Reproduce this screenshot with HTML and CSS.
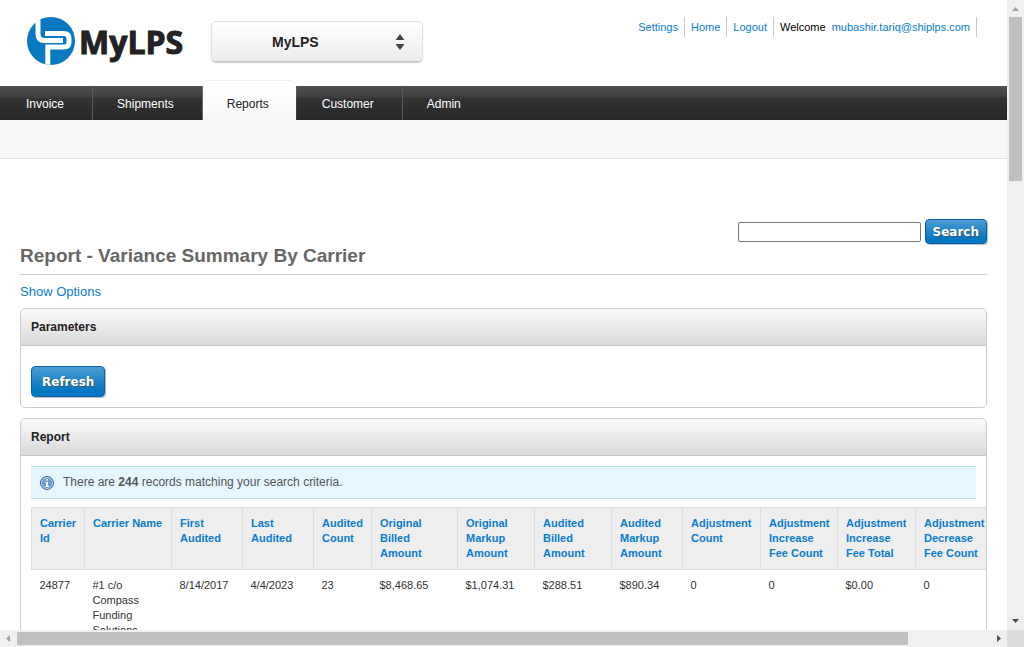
FILE: index.html
```html
<!DOCTYPE html>
<html lang="en">
<head>
<meta charset="utf-8">
<title>MyLPS - Variance Summary By Carrier</title>
<link rel="stylesheet" href="styles.css">
</head>
<body>
<div class="window">
  <div class="page">
    <header class="header">
      <a class="logo" href="#">
        <svg class="logo-mark" viewBox="0 0 48 48" aria-hidden="true">
          <defs><clipPath id="disc"><circle cx="24" cy="24" r="24"/></clipPath></defs>
          <circle cx="24" cy="24" r="24" fill="#0879c0"/>
          <g clip-path="url(#disc)" fill="none" stroke="#fff">
            <path d="M11 0V17Q11 23.500 17.500 23.500H36" stroke-width="5"/>
            <path d="M20.800 48V30H37Q42 30 42 25V21.500Q42 16.500 37 16.500H18" stroke-width="5"/>
          </g>
        </svg>
        <span class="logo-text">MyLPS</span>
      </a>
      <div class="picker">
        <select class="picker-select" aria-label="Application"><option>MyLPS</option></select>
        <svg class="picker-arrows" viewBox="0 0 10 16" aria-hidden="true"><path d="M5 0L9.500 6H.5ZM5 16L.5 10H9.500Z" fill="#444"/></svg>
      </div>
      <ul class="user-links">
        <li><a href="#">Settings</a></li>
        <li><a href="#">Home</a></li>
        <li><a href="#">Logout</a></li>
        <li>Welcome <a class="user" href="#">mubashir.tariq@shiplps.com</a></li>
      </ul>
    </header>
    <nav class="nav">
      <a href="#">Invoice</a>
      <a href="#">Shipments</a>
      <a class="active" href="#">Reports</a>
      <a href="#">Customer</a>
      <a class="last" href="#">Admin</a>
    </nav>
    <div class="subnav"></div>
    <main class="content">
      <form class="search">
        <input class="search-box" type="text" aria-label="Search">
        <button class="btn btn-small" type="button">Search</button>
      </form>
      <h1 class="title">Report - Variance Summary By Carrier</h1>
      <a class="options" href="#">Show Options</a>
      <section class="panel">
        <h2 class="panel-head">Parameters</h2>
        <div class="panel-body params"><button class="btn" type="button">Refresh</button></div>
      </section>
      <section class="panel">
        <h2 class="panel-head">Report</h2>
        <div class="panel-body">
          <p class="notice">
            <svg class="info" viewBox="0 0 14 14" aria-hidden="true">
              <circle cx="7" cy="7" r="6.500" fill="#6c9bd0" stroke="#4168a0"/>
              <circle cx="7" cy="7" r="5.500" fill="none" stroke="#c3d9f0" stroke-width=".8"/>
              <path d="M6 3h2v1.500H6ZM5.500 6H8v4h1v1H5.200v-1H6V7h-.5Z" fill="#fff"/>
            </svg>
            <span>There are <b>244</b> records matching your search criteria.</span>
          </p>
          <table class="report">
            <colgroup>
              <col class="w53"><col class="w87"><col class="w71"><col class="w71"><col class="w58"><col class="w86"><col class="w77"><col class="w77"><col class="w71"><col class="w78"><col class="w77"><col class="w78"><col class="w78">
            </colgroup>
            <thead>
              <tr>
                <th><a href="#">Carrier Id</a></th>
                <th><a href="#">Carrier Name</a></th>
                <th><a href="#">First Audited</a></th>
                <th><a href="#">Last Audited</a></th>
                <th><a href="#">Audited Count</a></th>
                <th><a href="#">Original Billed Amount</a></th>
                <th><a href="#">Original Markup Amount</a></th>
                <th><a href="#">Audited Billed Amount</a></th>
                <th><a href="#">Audited Markup Amount</a></th>
                <th><a href="#">Adjustment Count</a></th>
                <th><a href="#">Adjustment Increase Fee&nbsp;Count</a></th>
                <th><a href="#">Adjustment Increase Fee&nbsp;Total</a></th>
                <th><a href="#">Adjustment Decrease Fee&nbsp;Count</a></th>
              </tr>
            </thead>
            <tbody>
              <tr>
                <td>24877</td>
                <td>#1 c/o Compass Funding Solutions</td>
                <td>8/14/2017</td>
                <td>4/4/2023</td>
                <td>23</td>
                <td>$8,468.65</td>
                <td>$1,074.31</td>
                <td>$288.51</td>
                <td>$890.34</td>
                <td>0</td>
                <td>0</td>
                <td>$0.00</td>
                <td>0</td>
              </tr>
            </tbody>
          </table>
        </div>
      </section>
    </main>
  </div>
  <div class="bar bar-v">
    <svg class="arrow" viewBox="0 0 17 17" aria-hidden="true"><path d="M5 11L8.500 7L12 11Z" fill="#a3a3a3"/></svg>
    <div class="track"><div class="thumb"></div></div>
    <svg class="arrow" viewBox="0 0 17 17" aria-hidden="true"><path d="M5 6L8.500 10L12 6Z" fill="#505050"/></svg>
  </div>
  <div class="bar bar-h">
    <svg class="arrow" viewBox="0 0 17 17" aria-hidden="true"><path d="M10 5L6 8.500L10 12Z" fill="#a3a3a3"/></svg>
    <div class="track"><div class="thumb"></div></div>
    <svg class="arrow" viewBox="0 0 17 17" aria-hidden="true"><path d="M7 5L11 8.500L7 12Z" fill="#505050"/></svg>
  </div>
  <div class="corner"></div>
</div>
</body>
</html>
```
FILE: styles.css
```css
* { box-sizing: border-box; }
body {
  margin: 0;
  font: 12px/15px "Liberation Sans", Arial, sans-serif;
  color: #222;
  background: #fff;
}
a { color: #0a7cce; text-decoration: none; }

.window {
  display: grid;
  grid-template-columns: minmax(0, 1fr) 17px;
  grid-template-rows: minmax(0, 1fr) 17px;
  height: 100vh;
}
.page { overflow: hidden; }

.header {
  display: flex;
  align-items: flex-start;
  height: 86px;
  padding: 17px 30px 0 27px;
}
.logo { display: flex; gap: 4px; width: 184px; color: #222; }
.logo-mark { width: 48px; height: 48px; flex: none; }
.logo-text { font: 700 32px/50px "Open Sans", "Noto Sans", sans-serif; -webkit-text-stroke: 1px #222; }
.picker { position: relative; width: 212px; margin-top: 4px; }
.picker-select {
  appearance: none;
  display: block;
  width: 100%;
  height: 41px;
  padding: 0 40px 0 60px;
  border: 1px solid #e2e2e2;
  border-bottom-color: #c4c4c4;
  border-radius: 5px;
  background: linear-gradient(#fff, #ececec);
  box-shadow: 0 1px 1px #ccc;
  font: bold 14px/20px "Liberation Sans", Arial, sans-serif;
  color: #222;
}
.picker-arrows { position: absolute; right: 18px; top: 13px; width: 10px; height: 16px; pointer-events: none; }
.user-links {
  display: flex;
  margin: 0 0 0 auto;
  padding: 0;
  list-style: none;
  font-size: 11px;
  line-height: 20px;
  color: #000;
}
.user-links li { padding: 0 6px; border-right: 1px solid #c8c8c8; }
.user { margin-left: 3px; }

.nav {
  display: flex;
  align-items: flex-end;
  height: 34px;
  padding-left: 2px;
  background: linear-gradient(#505050, #3c3c3c 35%, #333 36%, #262626);
}
.nav a {
  height: 34px;
  padding: 0 28px 0 24px;
  border-right: 1px solid #5a5a5a;
  line-height: 37px;
  color: #fff;
}
.nav .active {
  height: 39px;
  margin-right: 2px;
  padding-right: 27px;
  border: 0;
  border-radius: 6px 6px 0 0;
  background: linear-gradient(#fff, #f7f7f7);
  line-height: 47px;
  box-shadow: 0 -1px 1px #eee;
  color: #222;
}
.nav .last { border: 0; }
.subnav { height: 39px; border-bottom: 1px solid #e0e0e0; background: #f7f7f7; }

.content { padding: 60px 20px 0; }
.search { display: flex; justify-content: flex-end; align-items: center; gap: 4px; }
.search-box { width: 183px; height: 20px; border: 1px solid #767676; border-radius: 2px; background: #fff; }
.btn {
  height: 31px;
  padding: 0 10px;
  border: 1px solid #0662ae;
  border-radius: 4px;
  background: linear-gradient(#4d9dd3, #0477c2 80%);
  box-shadow: 1px 1px 1px #bbb;
  font: bold 12px/16px "DejaVu Sans", sans-serif;
  color: #fff;
  text-shadow: 1px 1px 1px #456;
}
.btn-small { height: 25px; padding: 0 7px; }
.title {
  margin: 0 0 9px;
  padding-bottom: 6px;
  border-bottom: 1px solid #ccc;
  font-size: 19px;
  line-height: 24px;
  color: #666;
}
.options { display: block; margin-bottom: 8px; font-size: 13px; line-height: 16px; }

.panel { margin-bottom: 10px; border: 1px solid #ccc; border-radius: 5px; overflow: hidden; }
.panel-head {
  margin: 0;
  padding: 0 10px;
  border-bottom: 1px solid #c6c6c6;
  background: linear-gradient(#fafafa, #d9d9d9);
  font-size: 12px;
  line-height: 36px;
}
.panel-body { padding: 10px; }
.params { padding-top: 20px; }
.params .btn { display: block; }
.notice {
  display: flex;
  align-items: center;
  gap: 9px;
  height: 33px;
  margin: 0 0 8px;
  padding: 0 9px;
  border: solid #b5e1f4;
  border-width: 1px 0;
  background: #e6f6ff;
  color: #555;
}
.info { width: 14px; height: 14px; }

.report {
  width: 932px;
  border-collapse: collapse;
  table-layout: fixed;
  font-size: 11px;
  color: #333;
}
.report th, .report td { padding: 8px; text-align: left; vertical-align: top; }
.report th { height: 62px; border: 1px solid #ddd; background: #eee; }
.w53 { width: 53px; }
.w58 { width: 58px; }
.w71 { width: 71px; }
.w77 { width: 77px; }
.w78 { width: 78px; }
.w86 { width: 86px; }
.w87 { width: 87px; }

.bar { display: flex; background: #f0f0f0; }
.bar-v { grid-column: 2; grid-row: 1; flex-direction: column; }
.bar-h { grid-column: 1; grid-row: 2; }
.arrow { width: 17px; height: 17px; flex: none; }
.track { flex: 1; }
.thumb { background: #c0c0c0; }
.bar-v .track { padding: 0 2px; }
.bar-v .thumb { height: 164px; }
.bar-h .track { padding: 2px 0; }
.bar-h .thumb { width: 91.6%; height: 13px; }
.corner { background: #dcdcdc; }
```
